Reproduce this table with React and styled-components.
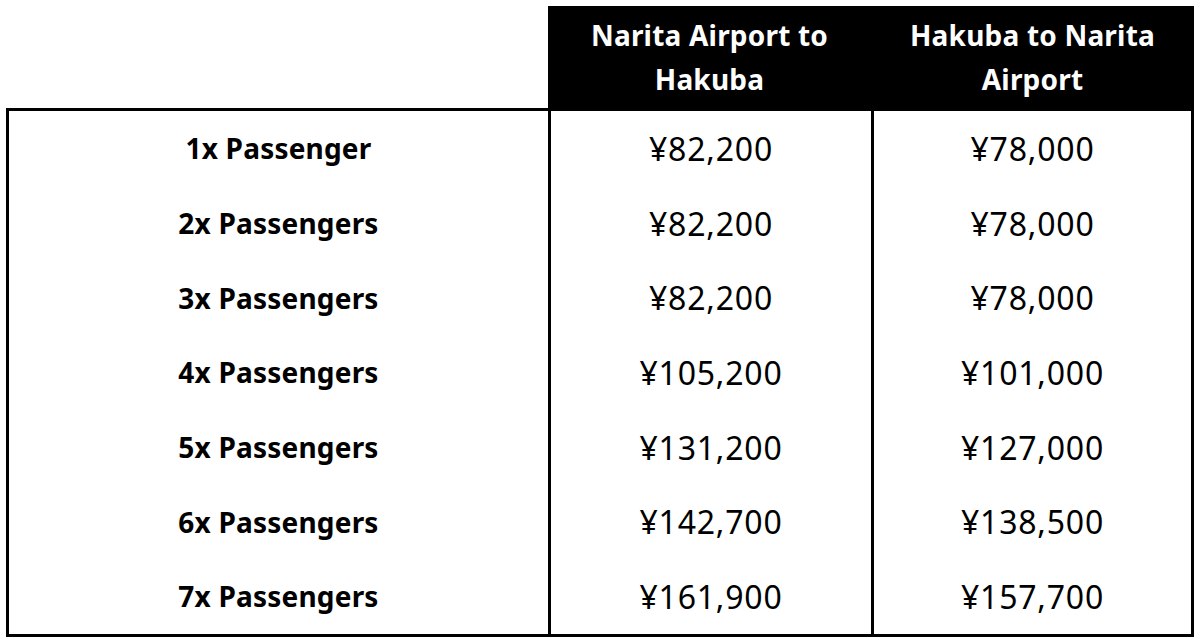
import React from "react";
import styled, { createGlobalStyle } from "styled-components";

const Global = createGlobalStyle`
  html, body { margin: 0; padding: 0; background: #fff; }
  body { font-family: "Noto Sans", "Open Sans", sans-serif; color: #000; }
`;

const Page = styled.div`
  padding: 6px 6px 0 6px;
  width: 1188px;
`;

const HeaderRow = styled.div`
  display: grid;
  grid-template-columns: 542px 323px 323px;
  height: 102px;
`;

const HeaderCell = styled.div`
  background: ${(p) => (p.$dark ? "#000" : "transparent")};
  color: #fff;
  font-weight: 700;
  font-size: 28px;
  line-height: 44px;
  display: flex;
  align-items: center;
  justify-content: center;
  text-align: center;
  padding: 0 36px;
  letter-spacing: 0.2px;
`;

const Body = styled.div`
  border: 3px solid #000;
  display: grid;
  grid-template-columns: 539px 323px 320px;
  grid-auto-rows: 74.7px;
`;

const Cell = styled.div`
  display: flex;
  align-items: center;
  justify-content: center;
  font-size: ${(p) => (p.$bold ? "28px" : "32px")};
  font-weight: ${(p) => (p.$bold ? 700 : 400)};
  letter-spacing: ${(p) => (p.$bold ? "0.2px" : "0.8px")};
  border-left: ${(p) => (p.$divider ? "3px solid #000" : "none")};
`;

const rows = [
  ["1x Passenger", "¥82,200", "¥78,000"],
  ["2x Passengers", "¥82,200", "¥78,000"],
  ["3x Passengers", "¥82,200", "¥78,000"],
  ["4x Passengers", "¥105,200", "¥101,000"],
  ["5x Passengers", "¥131,200", "¥127,000"],
  ["6x Passengers", "¥142,700", "¥138,500"],
  ["7x Passengers", "¥161,900", "¥157,700"],
];

export default function App() {
  return (
    <Page>
      <Global />
      <HeaderRow>
        <HeaderCell />
        <HeaderCell $dark>Narita Airport to Hakuba</HeaderCell>
        <HeaderCell $dark>Hakuba to Narita Airport</HeaderCell>
      </HeaderRow>
      <Body>
        {rows.map(([label, a, b]) => (
          <React.Fragment key={label}>
            <Cell $bold>{label}</Cell>
            <Cell $divider>{a}</Cell>
            <Cell $divider>{b}</Cell>
          </React.Fragment>
        ))}
      </Body>
    </Page>
  );
}
